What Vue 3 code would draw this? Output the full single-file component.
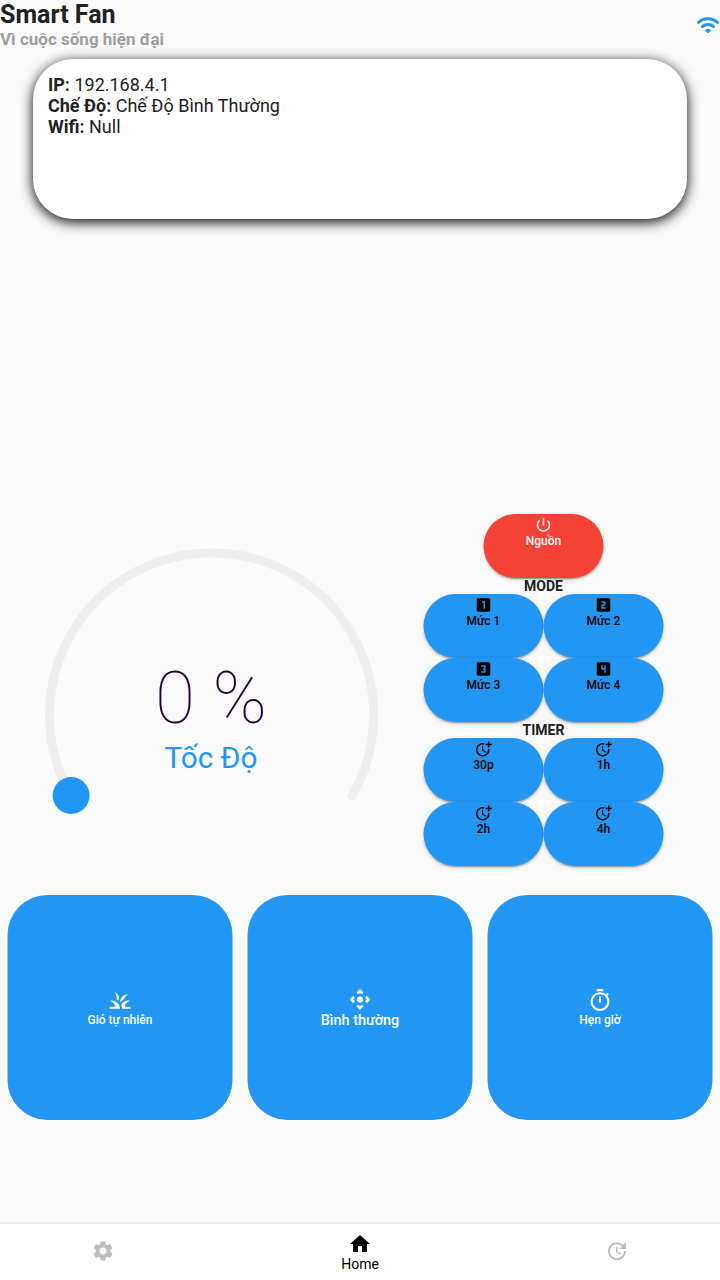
<script setup>
const square = 'M19 3H5c-1.1 0-2 .9-2 2v14c0 1.1.9 2 2 2h14c1.1 0 2-.9 2-2V5c0-1.1-.9-2-2-2z'
const moreTime = 'M10 8v6l4.7 2.9.8-1.2-4-2.4V8zM17.92 12c.05.33.08.66.08 1 0 3.9-3.1 7-7 7s-7-3.1-7-7 3.1-7 7-7c.7 0 1.37.1 2 .29V4.23C12.36 4.08 11.69 4 11 4c-5 0-9 4-9 9s4 9 9 9 9-4 9-9c0-.34-.02-.67-.06-1h-2.02zM20 5V2h-2v3h-3v2h3v3h2V7h3V5z'

const modes = [
  { label: 'Mức 1', icon: square + 'm-5 14h-2V9h-2V7h4v10z' },
  { label: 'Mức 2', icon: square + 'm-4 8c0 1.11-.9 2-2 2h-2v2h4v2H9v-4c0-1.11.9-2 2-2h2V9H9V7h4c1.1 0 2 .89 2 2v2z' },
  { label: 'Mức 3', icon: square + 'm-4 7.5c0 .83-.67 1.5-1.5 1.5.83 0 1.5.67 1.5 1.5V15c0 1.11-.9 2-2 2H9v-2h4v-2h-2v-2h2V9H9V7h4c1.1 0 2 .89 2 2v1.5z' },
  { label: 'Mức 4', icon: square + 'm-4 14h-2v-4H9V7h2v4h2V7h2v10z' },
]

const timers = ['30p', '1h', '2h', '4h']

const tiles = [
  {
    label: 'Gió tự nhiên',
    icon: 'M12 20H2v-2h5.75C7.02 15.19 4.81 12.99 2 12.26 2.64 12.1 3.31 12 4 12c4.42 0 8 3.58 8 8zM22 12.26C21.36 12.1 20.69 12 20 12c-2.93 0-5.48 1.58-6.88 3.93.29.66.53 1.35.67 2.07.13.65.2 1.32.2 2h8v-2h-5.75c.74-2.81 2.95-5.01 5.76-5.74zM15.64 11.02c.78-2.09 2.23-3.84 4.09-5C15.44 6.16 12 9.67 12 14v.02c.95-1.27 2.2-2.3 3.64-3zM11.42 8.85C10.58 6.66 8.88 4.89 6.7 4 8.14 5.86 9 8.18 9 10.71c0 .21-.03.41-.04.61.43.24.83.52 1.22.82.21-1.18.65-2.29 1.24-3.29z',
  },
  {
    label: 'Bình thường',
    large: true,
    icon: 'M15.54 5.54 13.77 7.3 12 5.54 10.23 7.3 8.46 5.54 12 2zm2.92 10-1.76-1.77L18.46 12l-1.76-1.77 1.76-1.77L22 12zm-10 2.92 1.77-1.76L12 18.46l1.77-1.76 1.77 1.76L12 22zm-2.92-10 1.76 1.77L5.54 12l1.76 1.77-1.76 1.77L2 12zM12 9a3 3 0 1 0 0 6 3 3 0 0 0 0-6z',
  },
  {
    label: 'Hẹn giờ',
    icon: 'M15 1H9v2h6V1zm-4 13h2V8h-2v6zm8.03-6.61 1.42-1.42c-.43-.51-.9-.99-1.41-1.41l-1.42 1.42C16.07 4.74 14.12 4 12 4c-4.97 0-9 4.03-9 9s4.02 9 9 9 9-4.03 9-9c0-2.12-.74-4.07-1.97-5.61zM12 20c-3.87 0-7-3.13-7-7s3.13-7 7-7 7 3.13 7 7-3.13 7-7 7z',
  },
]
</script>

<template>
  <div class="screen">
    <header class="header">
      <div>
        <h1>Smart Fan</h1>
        <p>Vì cuộc sống hiện đại</p>
      </div>
      <svg class="wifi" viewBox="0 0 24 24">
        <path d="M2.5 9.3C7.9 4.6 16.1 4.6 21.5 9.3M6.5 13.5c3.1-2.7 7.9-2.7 11 0" />
        <path class="dot" d="M9.6 16.6c1.4-1.1 3.4-1.1 4.8 0 .5.4.5.9.1 1.3l-1.8 1.8c-.4.4-1 .4-1.4 0l-1.8-1.8c-.4-.4-.4-.9.1-1.3z" />
      </svg>
    </header>

    <section class="info">
      <div><b>IP:</b> 192.168.4.1</div>
      <div><b>Chế Độ:</b> Chế Độ Bình Thường</div>
      <div><b>Wifi:</b> Null</div>
    </section>

    <section class="controls">
      <div class="dial">
        <svg viewBox="0 0 360 360">
          <path class="track" d="M39.2 261A162.1 162.1 0 1 1 320 261" />
          <circle class="knob" cx="39.1" cy="260.5" r="18.5" />
        </svg>
        <div class="reading">
          <div class="value">0 %</div>
          <div class="caption">Tốc Độ</div>
        </div>
      </div>

      <div class="panel">
        <button class="pill power">
          <svg viewBox="0 0 24 24"><path d="M13 3h-2v10h2V3zm4.83 2.17-1.42 1.42C17.99 7.86 19 9.81 19 12c0 3.87-3.13 7-7 7s-7-3.13-7-7c0-2.19 1.01-4.14 2.58-5.42L6.17 5.17C4.23 6.82 3 9.26 3 12c0 4.97 4.03 9 9 9s9-4.03 9-9c0-2.74-1.23-5.18-3.17-6.83z" /></svg>
          <span>Nguồn</span>
        </button>
        <h2>MODE</h2>
        <div class="grid">
          <button v-for="m in modes" :key="m.label" class="pill">
            <svg viewBox="0 0 24 24"><path :d="m.icon" fill-rule="evenodd" /></svg>
            <span>{{ m.label }}</span>
          </button>
        </div>
        <h2>TIMER</h2>
        <div class="grid">
          <button v-for="t in timers" :key="t" class="pill">
            <svg viewBox="0 0 24 24"><path :d="moreTime" /></svg>
            <span>{{ t }}</span>
          </button>
        </div>
      </div>
    </section>

    <section class="tiles">
      <button v-for="t in tiles" :key="t.label" class="tile" :class="{ large: t.large }">
        <svg viewBox="0 0 24 24"><path :d="t.icon" /></svg>
        <span>{{ t.label }}</span>
      </button>
    </section>

    <nav class="nav">
      <a class="item">
        <svg viewBox="0 0 24 24"><path d="M19.14 12.94c.04-.3.06-.61.06-.94 0-.32-.02-.64-.07-.94l2.03-1.58c.18-.14.23-.41.12-.61l-1.92-3.32c-.12-.22-.37-.29-.59-.22l-2.39.96c-.5-.38-1.03-.7-1.62-.94l-.36-2.54c-.04-.24-.24-.41-.48-.41h-3.84c-.24 0-.43.17-.47.41l-.36 2.54c-.59.24-1.13.57-1.62.94l-2.39-.96c-.22-.08-.47 0-.59.22L2.74 8.87c-.12.21-.08.47.12.61l2.03 1.58c-.05.3-.09.63-.09.94s.02.64.07.94l-2.03 1.58c-.18.14-.23.41-.12.61l1.92 3.32c.12.22.37.29.59.22l2.39-.96c.5.38 1.03.7 1.62.94l.36 2.54c.05.24.24.41.48.41h3.84c.24 0 .44-.17.47-.41l.36-2.54c.59-.24 1.13-.56 1.62-.94l2.39.96c.22.08.47 0 .59-.22l1.92-3.32c.12-.22.07-.47-.12-.61l-2.01-1.58zM12 15.6c-1.98 0-3.6-1.62-3.6-3.6s1.62-3.6 3.6-3.6 3.6 1.62 3.6 3.6-1.62 3.6-3.6 3.6z" /></svg>
      </a>
      <a class="item active">
        <svg viewBox="0 0 24 24"><path d="M10 20v-6h4v6h5v-8h3L12 3 2 12h3v8z" /></svg>
        <span>Home</span>
      </a>
      <a class="item">
        <svg viewBox="0 0 24 24"><path d="M21 10.12h-6.78l2.74-2.82c-2.73-2.7-7.15-2.8-9.88-.1-2.73 2.71-2.73 7.08 0 9.79s7.15 2.71 9.88 0C18.32 15.65 19 14.08 19 12.1h2c0 1.98-.88 4.55-2.64 6.29-3.51 3.48-9.21 3.48-12.72 0-3.5-3.47-3.53-9.11-.02-12.58s9.14-3.47 12.65 0L21 3v7.12zM12.5 8v4.25l3.5 2.08-.72 1.21L11 13V8h1.5z" /></svg>
      </a>
    </nav>
  </div>
</template>

<style>
body {
  background: #fafafa;
}
</style>

<style scoped>
.screen {
  display: flex;
  flex-direction: column;
  box-sizing: border-box;
  height: 1280px;
  overflow: hidden;
  background: #fafafa;
  color: #212121;
  font-family: Roboto, "Noto Sans", sans-serif;
}
svg {
  display: block;
  flex: none;
  fill: currentColor;
}
h1, h2, p {
  margin: 0;
}
button {
  border: 0;
  padding: 0;
  font-family: inherit;
}
.header {
  display: flex;
  align-items: center;
  justify-content: space-between;
  height: 49px;
}
h1 {
  font-size: 25px;
  line-height: 29px;
  font-weight: 700;
}
.header p {
  font-size: 17px;
  line-height: 20px;
  font-weight: 700;
  color: #9e9e9e;
}
.wifi {
  width: 24px;
  height: 24px;
  fill: none;
  stroke: #2196f3;
  stroke-width: 3;
  stroke-linecap: round;
}
.wifi .dot {
  fill: #2196f3;
  stroke: none;
}
.info {
  box-sizing: border-box;
  width: 654px;
  height: 160px;
  margin: 10px auto 0;
  padding: 15px;
  border-radius: 40px;
  background: #fff;
  box-shadow: 0 3px 12.5px #000;
  font-size: 18px;
  line-height: 21px;
}
.info b {
  font-weight: 700;
}
.controls {
  display: flex;
  justify-content: space-between;
  align-items: flex-start;
  height: 352px;
  margin-top: 295px;
  padding: 0 56px 0 32px;
}
.dial {
  display: grid;
  place-items: center;
  width: 360px;
  height: 360px;
  margin-top: 21px;
}
.dial > * {
  grid-area: 1 / 1;
}
.dial svg {
  width: 360px;
  height: 360px;
}
.track {
  fill: none;
  stroke: #eee;
  stroke-width: 9;
  stroke-linecap: round;
}
.knob {
  fill: #2196f3;
}
.reading {
  padding-right: 2px;
  text-align: center;
}
.value {
  font-size: 73px;
  line-height: 85px;
  font-weight: 100;
  color: #1e003b;
}
.caption {
  font-size: 29.7px;
  line-height: 34px;
  color: #2196f3;
}
.panel {
  display: flex;
  flex-direction: column;
  align-items: center;
  width: 240px;
}
h2 {
  font-size: 14px;
  line-height: 16px;
  font-weight: 700;
  transform: translateX(-0.5px);
}
.grid {
  display: grid;
  grid-template-columns: 120px 120px;
}
.pill {
  display: flex;
  flex-direction: column;
  align-items: center;
  box-sizing: border-box;
  width: 120px;
  height: 64px;
  padding-top: 2px;
  border-radius: 32px;
  background: #2196f3;
  color: #000;
  box-shadow: 0 3px 1px -2px rgba(0, 0, 0, 0.2), 0 2px 2px rgba(0, 0, 0, 0.14), 0 1px 5px rgba(0, 0, 0, 0.12);
  font-size: 12px;
  line-height: 14px;
  font-weight: 500;
  transform: translateX(-0.5px);
}
.pill svg {
  width: 18px;
  height: 18px;
}
.power {
  background: #f44336;
  color: #fff;
}
.tiles {
  display: flex;
  gap: 15px;
  margin-top: 29px;
  padding-left: 8px;
}
.tile {
  display: flex;
  flex-direction: column;
  align-items: center;
  justify-content: center;
  flex: none;
  box-sizing: border-box;
  width: 225px;
  height: 225px;
  border-radius: 40px;
  background: #2196f3;
  color: #fff;
  font-size: 12px;
  line-height: 14px;
  font-weight: 500;
  transform: translateX(-0.5px);
}
.tile.large {
  padding-top: 1px;
  font-size: 14.4px;
  line-height: 17px;
}
.tile svg {
  width: 25px;
  height: 25px;
}
.nav {
  display: flex;
  justify-content: space-between;
  height: 56px;
  margin-top: auto;
  background: #fff;
  box-shadow: 0 -1px 2px rgba(0, 0, 0, 0.09);
}
.item {
  display: flex;
  flex-direction: column;
  align-items: center;
  justify-content: center;
  box-sizing: border-box;
  width: 205.7px;
  padding-bottom: 2px;
  color: #bdbdbd;
  font-size: 14px;
  line-height: 16px;
}
.item svg {
  width: 24px;
  height: 24px;
}
.item.active {
  padding-bottom: 0;
  color: #000;
}
</style>
